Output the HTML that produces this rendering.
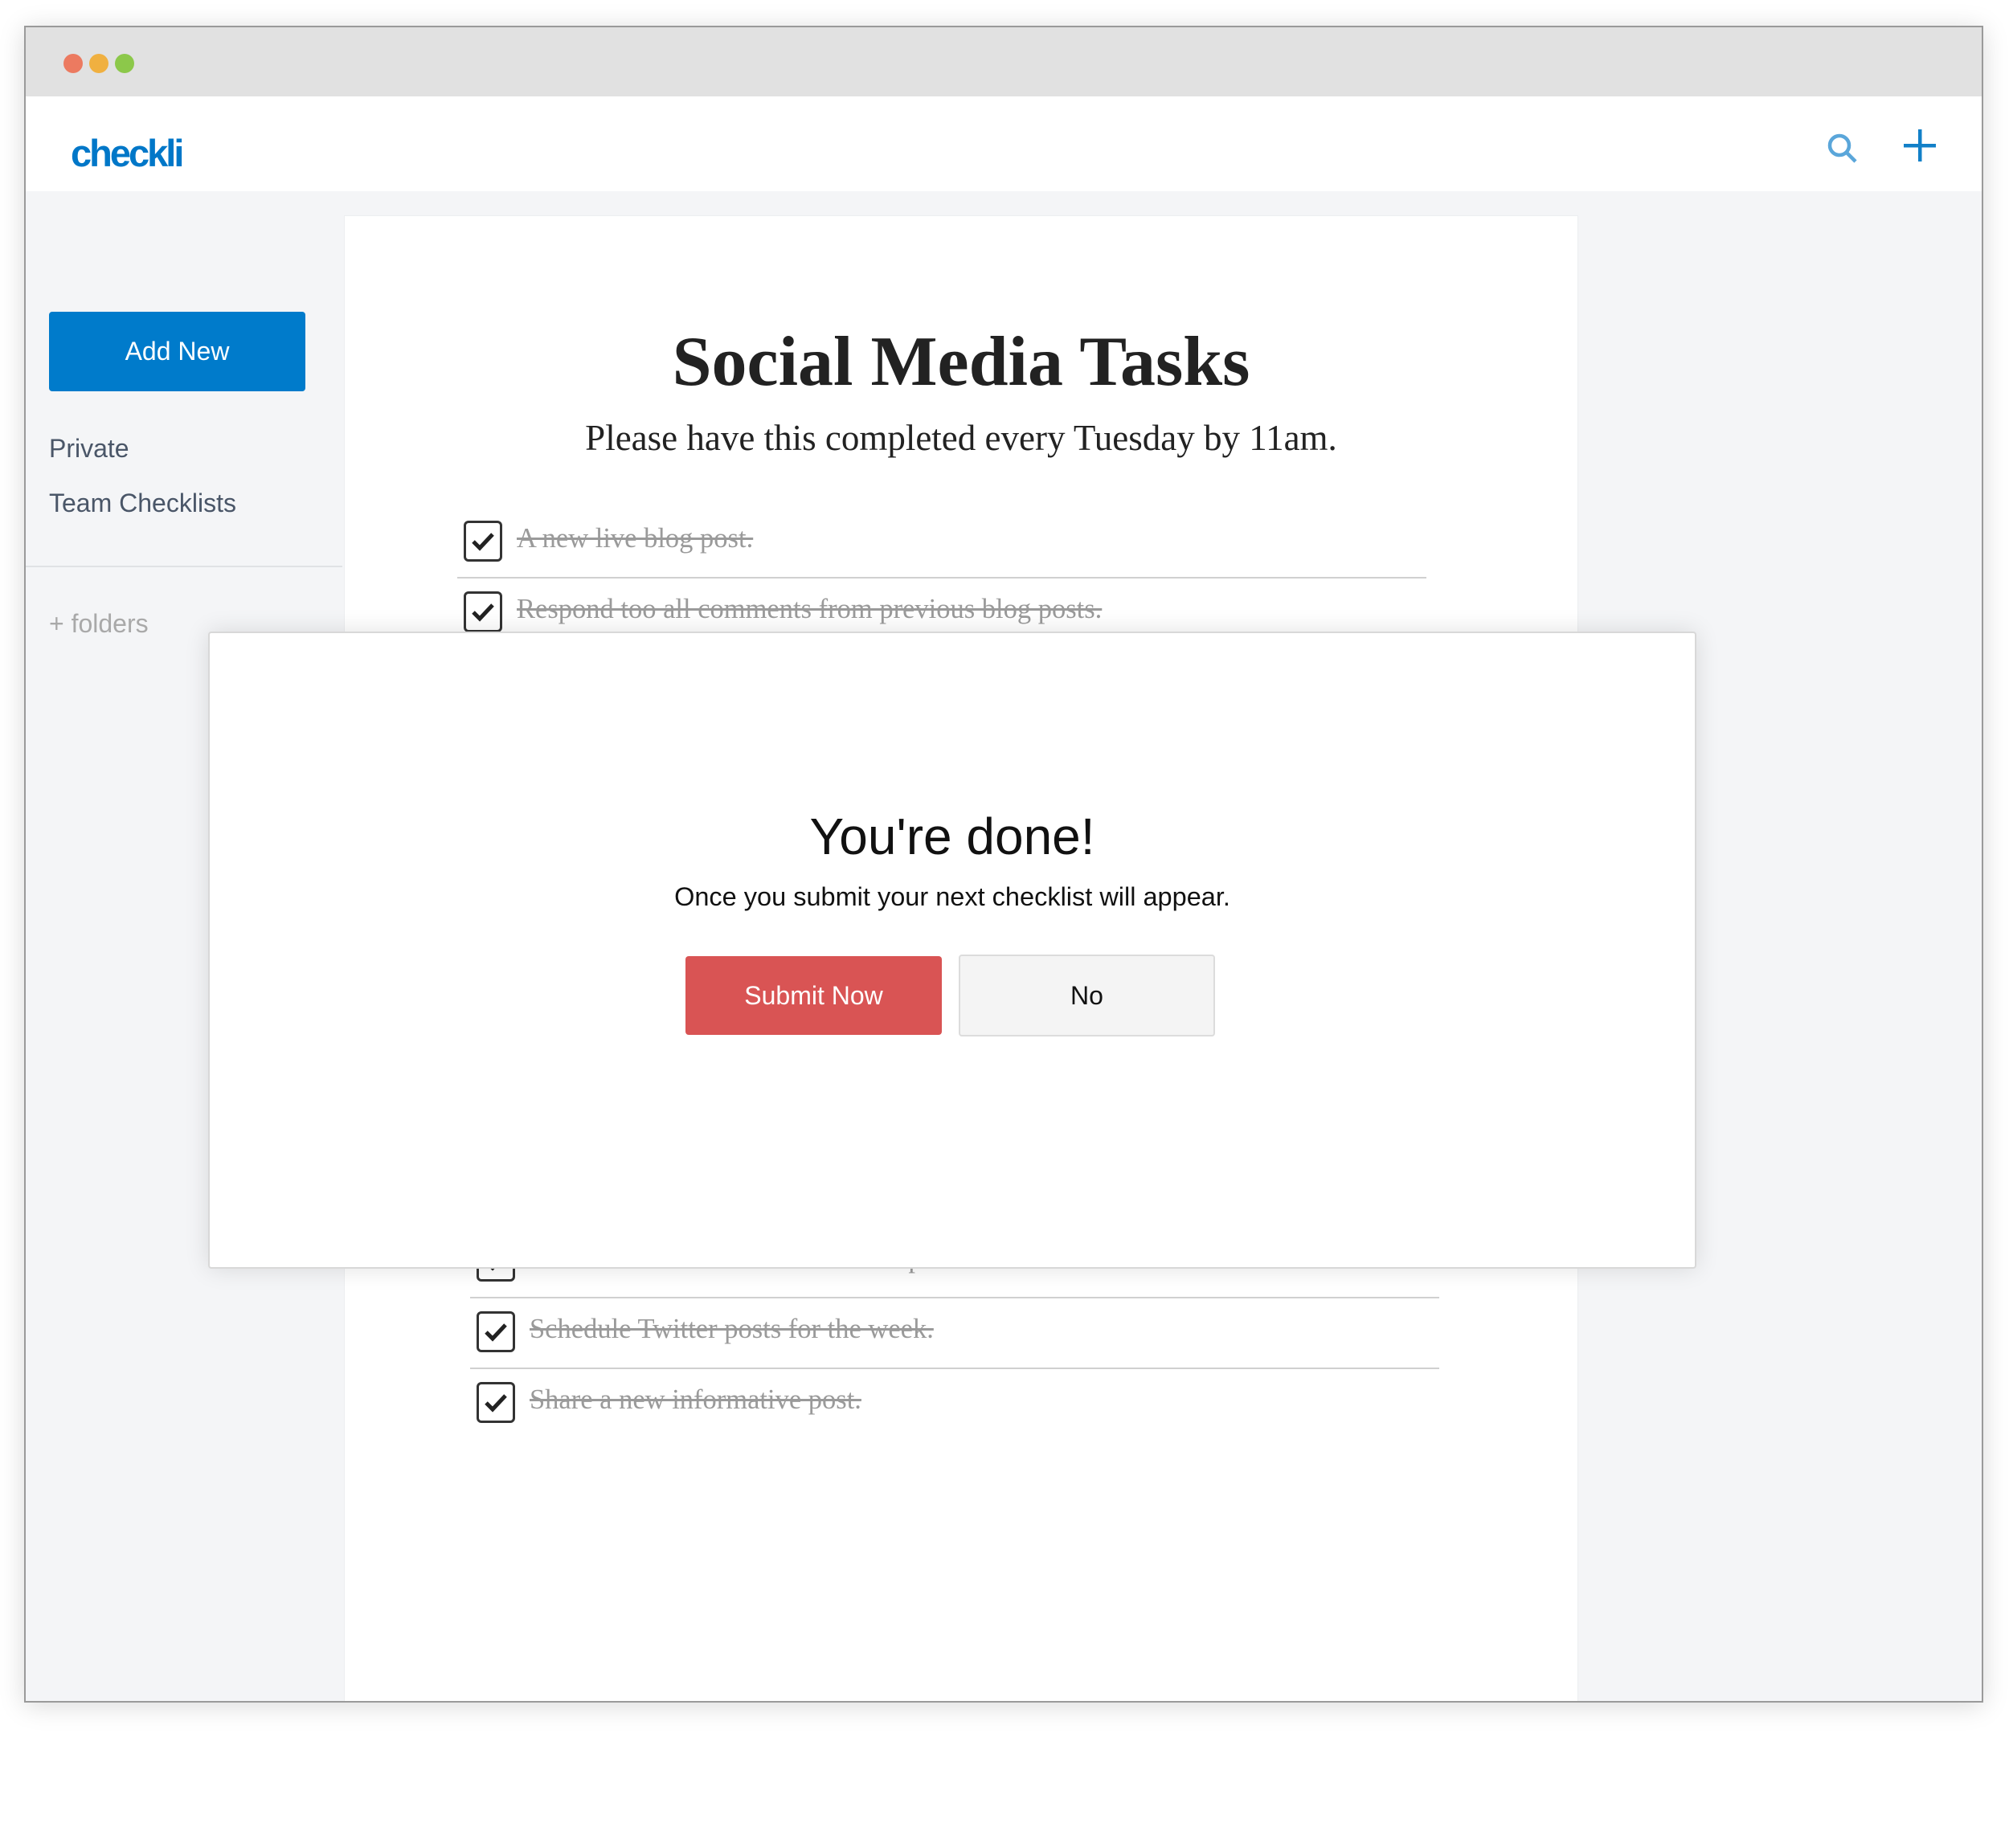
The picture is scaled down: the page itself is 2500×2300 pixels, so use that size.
<!DOCTYPE html>
<html><head><meta charset="utf-8"><style>
*{margin:0;padding:0;box-sizing:border-box}
body{width:2500px;height:2300px;background:#fff;position:relative;overflow:hidden;font-family:"Liberation Sans",sans-serif}
.abs{position:absolute}
.win{left:30px;top:32px;width:2438px;height:2087px;background:#f4f5f7;border:2px solid #9a9a9a;box-shadow:0 4px 30px rgba(0,0,0,.15);overflow:hidden}
.tb{left:0;top:0;width:100%;height:86px;background:#e1e1e1}
.dot{width:24px;height:24px;border-radius:50%;top:33px}
.hd{left:0;top:86px;width:100%;height:118px;background:#fff}
.logo{left:56px;top:43px;font-size:47px;font-weight:bold;color:#0077c8;letter-spacing:-3px}
.btn{display:flex;align-items:center;justify-content:center;border-radius:4px;font-size:32px}
.side{font-size:32px;color:#4a5668}
.card{left:396px;top:234px;width:1536px;height:1900px;background:#fff;border:1px solid #eceef0}
.serif{font-family:"Liberation Serif",serif}
.item{font-size:34.5px;color:#9a9a9a;text-decoration:line-through;font-family:"Liberation Serif",serif;white-space:nowrap}
.cb{width:48px;height:51px;border:3px solid #333;border-radius:6px;display:flex;align-items:center;justify-content:center}
.line{height:2px;background:#d0d0d0}
.modal{left:227px;top:752px;width:1852px;height:793px;background:#fff;border:2px solid #d8d8d8;border-radius:4px;box-shadow:0 0 30px rgba(0,0,0,.12)}
</style></head><body>
<div class="abs win">
 <div class="abs tb"></div>
 <div class="abs dot" style="left:47px;background:#ec7a60"></div>
 <div class="abs dot" style="left:79px;background:#f0b040"></div>
 <div class="abs dot" style="left:111px;background:#8cc84a"></div>
 <div class="abs hd">
  <div class="abs logo">checkli</div>
  <svg class="abs" style="left:2240px;top:44px" width="44" height="44" viewBox="0 0 44 44"><circle cx="17" cy="17" r="12" fill="none" stroke="#5aa6da" stroke-width="4.5"/><line x1="26" y1="26" x2="37" y2="37" stroke="#5aa6da" stroke-width="4.5"/></svg>
  <svg class="abs" style="left:2336px;top:40px" width="42" height="42" viewBox="0 0 42 42"><rect x="19" y="1" width="4.5" height="40" fill="#1280c8"/><rect x="1" y="19" width="40" height="4.5" fill="#1280c8"/></svg>
 </div>
 <div class="abs" style="left:0;top:670px;width:394px;height:2px;background:#e0e2e5"></div>
 <div class="abs btn" style="left:29px;top:354px;width:319px;height:99px;background:#007bcb;color:#fff">Add New</div>
 <div class="abs side" style="left:29px;top:506px">Private</div>
 <div class="abs side" style="left:29px;top:574px">Team Checklists</div>
 <div class="abs side" style="left:29px;top:724px;color:#a9a9a9">+ folders</div>
 <div class="abs card"></div>
 <div class="abs serif" style="left:396px;top:366px;width:1536px;text-align:center;font-size:88px;font-weight:bold;color:#222">Social Media Tasks</div>
 <div class="abs serif" style="left:396px;top:485px;width:1536px;text-align:center;font-size:45px;color:#222">Please have this completed every Tuesday by 11am.</div>

 <div class="abs cb" style="left:545px;top:614px"><svg width="30" height="26" viewBox="0 0 30 26"><path d="M3 13 L11 21 L27 4" fill="none" stroke="#222" stroke-width="5"/></svg></div>
 <div class="abs item" style="left:611px;top:617px">A new live blog post.</div>
 <div class="abs line" style="left:537px;top:684px;width:1206px"></div>
 <div class="abs cb" style="left:545px;top:702px"><svg width="30" height="26" viewBox="0 0 30 26"><path d="M3 13 L11 21 L27 4" fill="none" stroke="#222" stroke-width="5"/></svg></div>
 <div class="abs item" style="left:611px;top:705px">Respond too all comments from previous blog posts.</div>

 <div class="abs cb" style="left:561px;top:1510px"><svg width="30" height="26" viewBox="0 0 30 26"><path d="M3 13 L11 21 L27 4" fill="none" stroke="#222" stroke-width="5"/></svg></div>
 <div class="abs item" style="left:627px;top:1513px">Schedule Facebook and LinkedIn posts.</div>
 <div class="abs line" style="left:553px;top:1580px;width:1206px"></div>
 <div class="abs cb" style="left:561px;top:1598px"><svg width="30" height="26" viewBox="0 0 30 26"><path d="M3 13 L11 21 L27 4" fill="none" stroke="#222" stroke-width="5"/></svg></div>
 <div class="abs item" style="left:627px;top:1601px">Schedule Twitter posts for the week.</div>
 <div class="abs line" style="left:553px;top:1668px;width:1206px"></div>
 <div class="abs cb" style="left:561px;top:1686px"><svg width="30" height="26" viewBox="0 0 30 26"><path d="M3 13 L11 21 L27 4" fill="none" stroke="#222" stroke-width="5"/></svg></div>
 <div class="abs item" style="left:627px;top:1689px">Share a new informative post.</div>

 <div class="abs modal"></div>
 <div class="abs" style="left:227px;top:970px;width:1852px;text-align:center;font-size:64px;color:#111">You're done!</div>
 <div class="abs" style="left:227px;top:1064px;width:1852px;text-align:center;font-size:32.5px;color:#111">Once you submit your next checklist will appear.</div>
 <div class="abs btn" style="left:821px;top:1156px;width:319px;height:98px;background:#d95454;color:#fff">Submit Now</div>
 <div class="abs btn" style="left:1161px;top:1154px;width:319px;height:102px;background:#f4f4f4;border:2px solid #dcdcdc;color:#111">No</div>
</div>
</body></html>
